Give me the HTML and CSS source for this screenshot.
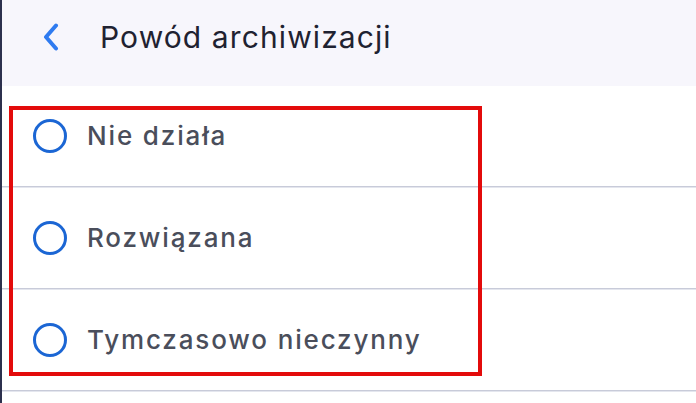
FILE: index.html
```html
<!DOCTYPE html>
<html lang="pl">
<head>
<meta charset="utf-8">
<title>Powód archiwizacji</title>
<link rel="stylesheet" href="styles.css">
</head>
<body>
<div class="screen">
  <header class="topbar">
    <button class="back" aria-label="Wstecz">
      <svg width="16" height="28" viewBox="0 0 16 28"><path d="M13 2.5 L3 14 L13 25.5" fill="none" stroke="#2f7bf0" stroke-width="4" stroke-linecap="round" stroke-linejoin="round"/></svg>
    </button>
    <h1 class="title">Powód archiwizacji</h1>
  </header>
  <ul class="options">
    <li class="option"><span class="radio"></span><span class="label">Nie działa</span></li>
    <li class="option"><span class="radio"></span><span class="label">Rozwiązana</span></li>
    <li class="option"><span class="radio"></span><span class="label">Tymczasowo nieczynny</span></li>
  </ul>
  <div class="highlight"></div>
</div>
</body>
</html>
```
FILE: styles.css
```css
html, body {
  margin: 0;
  padding: 0;
  background: #ffffff;
}
body {
  font-family: Inter, "Noto Sans", sans-serif;
  width: 696px;
  height: 403px;
  overflow: hidden;
}
.screen {
  position: relative;
  height: 403px;
  border-left: 2px solid #2c304d;
  box-sizing: border-box;
}
.topbar {
  height: 86px;
  background: #f7f6fc;
  display: flex;
  align-items: center;
  box-sizing: border-box;
  padding-left: 41px;
  padding-bottom: 12px;
}
.back {
  background: none;
  border: 0;
  padding: 0;
  width: 16px;
  height: 28px;
  display: flex;
}
.title {
  margin: 0 0 0 41px;
  font-size: 30px;
  font-weight: 400;
  color: #1f2231;
  letter-spacing: 1.1px;
}
.options {
  list-style: none;
  margin: 0;
  padding: 0;
}
.option {
  height: 101px;
  box-sizing: border-box;
  border-bottom: 1px solid #c8cbd9;
  box-shadow: 0 1px 0 #e4e6ee;
  display: flex;
  align-items: center;
  padding-left: 31px;
  padding-bottom: 1px;
}
.option + .option {
  margin-top: 1px;
}
.radio {
  width: 34px;
  height: 34px;
  box-sizing: border-box;
  border: 3px solid #1b66d4;
  border-radius: 50%;
  flex: none;
}
.label {
  margin-left: 20px;
  font-size: 26px;
  font-weight: 500;
  color: #4a4e5b;
  letter-spacing: 1.85px;
}
.highlight {
  position: absolute;
  left: 7px;
  top: 106px;
  width: 473px;
  height: 270px;
  box-sizing: border-box;
  border: 4px solid #e30b0b;
}
```
